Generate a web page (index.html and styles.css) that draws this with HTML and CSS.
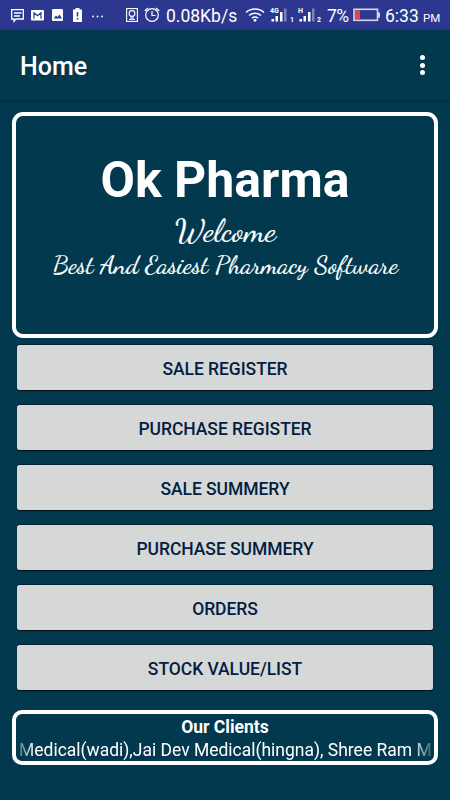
FILE: index.html
```html
<!DOCTYPE html>
<html lang="en">
<head>
    <meta charset="utf-8">
    <title>Ok Pharma - Home</title>
    <link rel="stylesheet" href="styles.css">
</head>
<body>
    <div class="status-bar">
        <svg class="status-icons" width="164" height="30" viewBox="0 0 164 30">
            <!-- message -->
            <path d="M11.700 9.600h11.600v9.400H16l-2 2.200V19h-2.300z" fill="none" stroke="#fff" stroke-width="1.300"/>
            <path d="M14 13h7.500M14 16h6" stroke="#fff" stroke-width="1.300"/>
            <!-- mail -->
            <rect x="31" y="10" width="13" height="10.500" rx="1" fill="#fff"/>
            <path d="M34 18.800v-6l3.500 3 3.500-3v6" fill="none" stroke="#2c388f" stroke-width="1.200"/>
            <!-- picture -->
            <rect x="52" y="9" width="11" height="12" rx="1.200" fill="#fff"/>
            <path d="M53.500 18.500l2.500-3 1.500 1.500 2-2.500 2.500 4z" fill="#2c388f"/>
            <!-- battery alert -->
            <path d="M73 9.500h2.500V8h4v1.500H82V22h-9z" fill="#fff"/>
            <path d="M77.500 12v4.500M77.500 18v1.600" stroke="#2c388f" stroke-width="1.500"/>
            <g fill="#fff">
                <circle cx="93" cy="16.500" r=".9"/>
                <circle cx="97.500" cy="16.500" r=".9"/>
                <circle cx="102" cy="16.500" r=".9"/>
            </g>
            <!-- location mode -->
            <g fill="none" stroke="#fff" stroke-width="1.100">
                <rect x="126.600" y="8.600" width="10.800" height="12.800"/>
                <circle cx="132" cy="13.500" r="2.900"/>
                <path d="M129 19.500h6M131 16.500v3M133 16.500v3"/>
            </g>
            <!-- alarm -->
            <g fill="none" stroke="#fff" stroke-width="1.200">
                <circle cx="152" cy="15" r="6.300"/>
                <path d="M152 11v4.500h3.500M144.800 11l3.200-3M159.200 11l-3.200-3"/>
            </g>
        </svg>
        <span class="speed">0.08Kb/s</span>
        <svg class="wifi" width="20" height="30" viewBox="0 0 20 30">
            <g fill="none" stroke="#fff" stroke-width="1.500">
                <path d="M1 12.500c5-4.600 13-4.600 18 0M4 15.500c3.400-3 8.600-3 12 0M7 18.200c1.800-1.500 4.200-1.500 6 0"/>
            </g>
            <circle cx="10" cy="20.300" r="1.400" fill="#fff"/>
        </svg>
        <svg class="signal" width="25" height="30" viewBox="0 0 25 30">
            <text x="0" y="13" class="net">4G</text>
            <path d="M1.500 19H4v2.500H1.500zM5.500 16H8v5.500H5.500zM10 12h2.500v9.500H10z" fill="#fff"/>
            <path d="M14 8.500h2.500v13H14z" fill="#7b83bd"/>
            <text x="20" y="21.500" class="sim">1</text>
        </svg>
        <svg class="signal" width="25" height="30" viewBox="0 0 25 30">
            <text x="0" y="13" class="net">H</text>
            <path d="M1.500 19H4v2.500H1.500zM5.500 16H8v5.500H5.500zM10 12h2.500v9.500H10z" fill="#fff"/>
            <path d="M14 8.500h2.500v13H14z" fill="#7b83bd"/>
            <text x="19" y="21.500" class="sim">2</text>
        </svg>
        <span class="percent">7%</span>
        <svg class="battery" width="28" height="30" viewBox="0 0 28 30">
            <rect x="1" y="9.300" width="23.500" height="11" fill="none" stroke="#d5d8ec" stroke-width="1.600"/>
            <path d="M25 12.500h2v5h-2z" fill="#d5d8ec"/>
            <rect x="2" y="10.300" width="5" height="9" fill="#e94352"/>
        </svg>
        <span class="clock">6:33 <small>PM</small></span>
    </div>

    <header class="app-bar">
        <h1>Home</h1>
        <div class="menu"><i></i><i></i><i></i></div>
    </header>

    <main class="content">
        <section class="banner">
            <h2>Ok Pharma</h2>
            <svg class="tagline" width="417" height="75" viewBox="0 0 417 75">
                <text class="welcome" x="159" y="33" textLength="101" lengthAdjust="spacingAndGlyphs">Welcome</text>
                <text class="slogan" x="37" y="65" textLength="345" lengthAdjust="spacingAndGlyphs">Best And Easiest Pharmacy Software</text>
            </svg>
        </section>

        <nav class="buttons">
            <button>SALE REGISTER</button>
            <button>PURCHASE REGISTER</button>
            <button>SALE SUMMERY</button>
            <button>PURCHASE SUMMERY</button>
            <button>ORDERS</button>
            <button>STOCK VALUE/LIST</button>
        </nav>

        <section class="clients">
            <h3>Our Clients</h3>
            <div class="ticker">Medical(wadi),Jai Dev Medical(hingna), Shree Ram M</div>
        </section>
    </main>
</body>
</html>
```
FILE: styles.css
```css
* {
    box-sizing: border-box;
}
body {
    margin: 0;
    height: 800px;
    overflow: hidden;
    background: #02394e;
    color: #fff;
    font-family: Roboto, 'Liberation Sans', sans-serif;
}
.status-bar {
    display: flex;
    height: 30px;
    background: #2c388f;
    line-height: 32px;
    font-size: 17.5px;
    white-space: nowrap;
}
.status-bar svg {
    flex: none;
}
.speed {
    width: 79px;
    padding-left: 2px;
}
.wifi {
    margin-left: 2px;
}
.signal {
    margin-left: 5px;
}
.signal + .signal {
    margin-left: 3px;
}
.net {
    font-size: 7px;
    font-weight: bold;
    fill: #fff;
}
.sim {
    font-size: 7px;
    font-weight: bold;
    fill: #fff;
}
.percent {
    width: 23px;
    margin-left: 4px;
    letter-spacing: -0.5px;
}
.battery {
    margin-left: 3px;
}
.clock {
    margin-left: 4px;
    font-size: 17.5px;
}
.clock small {
    font-size: 11.5px;
}
.app-bar {
    display: flex;
    align-items: center;
    justify-content: space-between;
    height: 70px;
    padding: 2px 25px 0 20px;
    box-shadow: 0 1px 3px rgba(0, 0, 0, 0.35);
}
.app-bar h1 {
    margin: 0;
    font-size: 25px;
    font-weight: 500;
}
.menu {
    display: flex;
    flex-direction: column;
    gap: 2.5px;
    margin-top: -2px;
}
.menu i {
    width: 5px;
    height: 5px;
    border-radius: 50%;
    background: #fff;
}
.content {
    padding: 12px 12px 0;
}
.banner {
    height: 226px;
    padding-top: 34px;
    border: 4px solid #fff;
    border-radius: 11px;
    text-align: center;
}
.banner h2 {
    margin: 0;
    font-size: 50px;
    line-height: 60px;
    font-weight: bold;
}
.tagline {
    display: block;
    margin-top: -2px;
}
.tagline text {
    font-family: 'Dancing Script', cursive;
    fill: #fff;
    stroke: #fff;
    stroke-width: 0.15px;
}
.welcome {
    font-size: 30px;
}
.slogan {
    font-size: 25px;
}
.buttons {
    display: grid;
    gap: 15px;
    padding: 7px 5px 0;
}
.buttons button {
    height: 45px;
    padding: 2px 0 0;
    border: none;
    border-radius: 2.5px;
    background: #d6d8d7;
    box-shadow: 0 1px 1px #001018, 0 -1px 0 #02222f;
    color: #041d42;
    font-family: inherit;
    font-size: 17.5px;
    line-height: 20px;
    font-weight: 500;
    letter-spacing: -0.05px;
}
.clients {
    height: 55px;
    margin-top: 20px;
    border: 4px solid #fff;
    border-radius: 10px;
    overflow: hidden;
}
.clients h3 {
    margin: 0;
    font-size: 17.5px;
    line-height: 26px;
    font-weight: bold;
    text-align: center;
}
.ticker {
    margin: 0 2px 0 3px;
    font-size: 17.5px;
    line-height: 21px;
    letter-spacing: -0.01px;
    white-space: nowrap;
    -webkit-mask-image: linear-gradient(to right, rgba(0, 0, 0, 0.3), #000 16px, #000 calc(100% - 20px), rgba(0, 0, 0, 0.2));
    mask-image: linear-gradient(to right, rgba(0, 0, 0, 0.3), #000 16px, #000 calc(100% - 20px), rgba(0, 0, 0, 0.2));
}
```
